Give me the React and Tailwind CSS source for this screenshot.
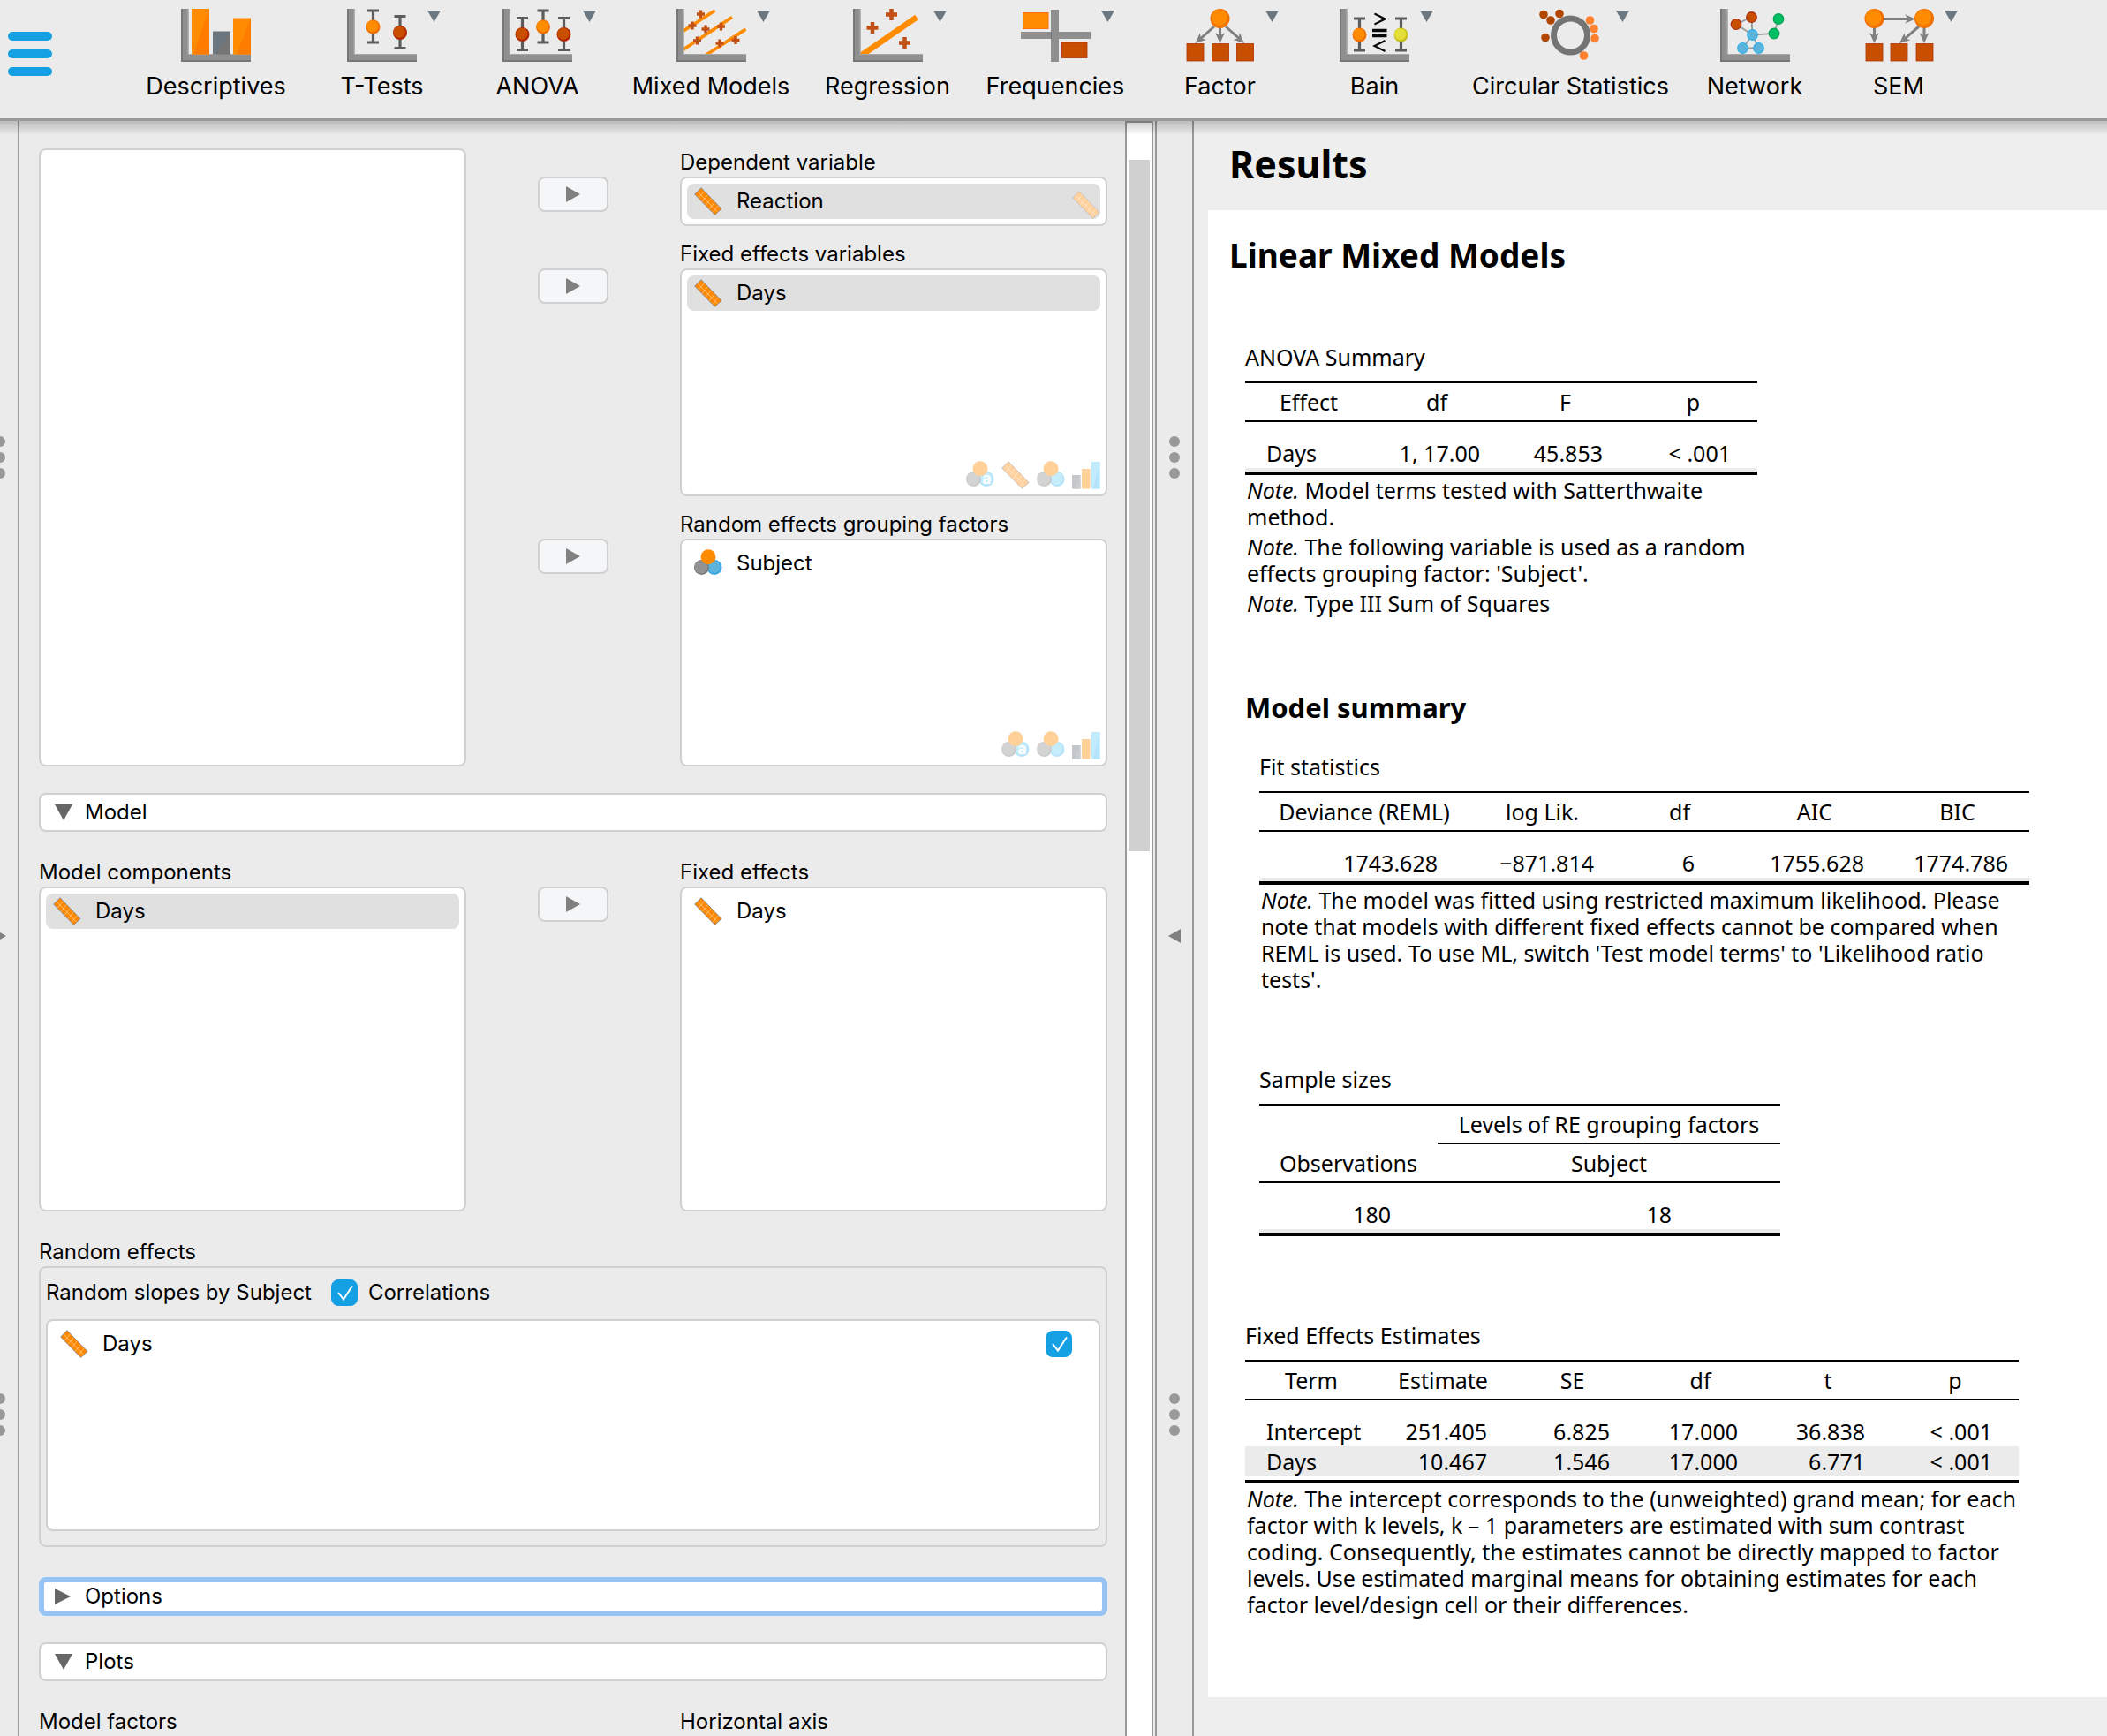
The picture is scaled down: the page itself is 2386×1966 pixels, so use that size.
import React, { useId } from "react";

/* ---------- toolbar drawings (79 x 60 canvas) ---------- */

const ORANGE = "#ff8c00";
const RUST = "#c84f00";
const GREY = "#8f8f8f";

function Canvas({ children }) {
  return (
    <svg width="79" height="60" viewBox="0 0 79 60" className="block shrink-0" aria-hidden="true">
      {children}
    </svg>
  );
}

function Axes() {
  return (
    <g>
      <path d="M0 0H8.5V51.5H79V60H0Z" fill={GREY} />
      <path d="M1 0V59H79" fill="none" stroke="#777" strokeWidth="2" />
      <path d="M8 0V51.5H79" fill="none" stroke="#a8a8a8" strokeWidth="1" />
    </g>
  );
}

function Ball({ x, y, r = 8.5, dark = "#f07000", light = ORANGE }) {
  return (
    <g>
      <circle cx={x} cy={y} r={r} fill={dark} />
      <circle cx={x - r * 0.08} cy={y - r * 0.1} r={r * 0.82} fill={light} />
    </g>
  );
}

function Whisker({ x, top, dark, light }) {
  return (
    <g>
      <path
        d={`M${x - 6.5} ${top + 2}H${x + 6.5}M${x - 6.5} ${top + 38}H${x + 6.5}M${x} ${top + 2}V${top + 38}`}
        stroke="#5c5c5c"
        strokeWidth="3.2"
        fill="none"
      />
      <Ball x={x} y={top + 20.5} r={8} dark={dark} light={light} />
    </g>
  );
}

function Plus({ x, y, s = 4.5, w = 3.4 }) {
  return <path d={`M${x - s} ${y}H${x + s}M${x} ${y - s}V${y + s}`} stroke="#c25015" strokeWidth={w} fill="none" />;
}

function Arrow({ x1, y1, x2, y2 }) {
  const a = Math.atan2(y2 - y1, x2 - x1);
  const at = (len, turn) => `${x2 - len * Math.cos(a + turn)} ${y2 - len * Math.sin(a + turn)}`;
  return (
    <g>
      <path d={`M${x1} ${y1}L${at(6, 0)}`} stroke="#808080" strokeWidth="3" fill="none" />
      <path d={`M${x2} ${y2}L${at(13, 0.42)}L${at(8.5, 0)}L${at(13, -0.42)}Z`} fill="#808080" />
    </g>
  );
}

function Box({ x, y = 39.5, w = 19, h = 19.5 }) {
  return <rect x={x} y={y} width={w} height={h} fill={RUST} stroke="#b03000" strokeWidth="0.8" />;
}

function DescriptivesIcon() {
  return (
    <Canvas>
      <Axes />
      <rect x="12" y="0" width="20" height="51.5" fill={ORANGE} />
      <path d="M32 0V51.5H14Z" fill="#ff7c00" />
      <rect x="36" y="25.5" width="20" height="26" fill="#6b767e" />
      <path d="M56 25.5V51.5H40Z" fill="#757575" />
      <rect x="59" y="10.5" width="20" height="41" fill={ORANGE} />
      <path d="M79 10.5V51.5H63Z" fill="#ff7c00" />
    </Canvas>
  );
}

function TTestsIcon() {
  return (
    <Canvas>
      <Axes />
      <Whisker x={29.5} top={0} />
      <Whisker x={60} top={6.5} dark="#b02800" light={RUST} />
    </Canvas>
  );
}

function AnovaIcon() {
  return (
    <Canvas>
      <Axes />
      <Whisker x={22.5} top={8.5} dark="#b02800" light={RUST} />
      <Whisker x={46} top={0} />
      <Whisker x={69.5} top={8.5} dark="#b02800" light={RUST} />
    </Canvas>
  );
}

function MixedIcon() {
  return (
    <Canvas>
      <path d="M8 25L43.500 2M8 46L63 9.500M34 52L78.500 23" stroke={ORANGE} strokeWidth="3.8" fill="none" />
      <Axes />
      <Plus x={27.500} y={6} />
      <Plus x={18} y={19} />
      <Plus x={33} y={23} />
      <Plus x={50.500} y={20} />
      <Plus x={23.500} y={36} />
      <Plus x={49} y={39} />
      <Plus x={67} y={35.500} />
    </Canvas>
  );
}

function RegressionIcon() {
  return (
    <Canvas>
      <path d="M9 53L72 9.500" stroke={ORANGE} strokeWidth="6.500" fill="none" />
      <Axes />
      <Plus x={43.500} y={6.500} s={6.500} w={4.500} />
      <Plus x={22} y={21.500} s={6.500} w={4.500} />
      <Plus x={58.500} y={38.500} s={6.500} w={4.500} />
    </Canvas>
  );
}

function FrequenciesIcon() {
  return (
    <Canvas>
      <rect x="2.500" y="4.500" width="28.500" height="18" fill={ORANGE} stroke="#ff7010" strokeWidth="1" />
      <rect x="0" y="26" width="79" height="8" fill={GREY} />
      <rect x="34" y="1" width="9" height="59" fill={GREY} />
      <path d="M34.500 26V34" stroke="#6b767e" strokeWidth="1" />
      <Box x={46.500} y={38} w={28.500} h={17.500} />
    </Canvas>
  );
}

function FactorIcon() {
  return (
    <Canvas>
      <Arrow x1={33} y1={20} x2={11.500} y2={39} />
      <Arrow x1={39.500} y1={20} x2={39.500} y2={39} />
      <Arrow x1={46} y1={20} x2={67} y2={39} />
      <Ball x={39.500} y={11} r={11} />
      <Box x={2} />
      <Box x={30.500} />
      <Box x={58.500} />
    </Canvas>
  );
}

function BainIcon() {
  return (
    <Canvas>
      <Axes />
      <Whisker x={22.500} top={9} />
      <Whisker x={69.500} top={9} dark="#c8c020" light="#e4de38" />
      <g fill="none" stroke="#0a0a0a">
        <path d="M39.500 5.500L51.500 11.500L39.500 17.500M51.500 36L39.500 42L51.500 48" strokeWidth="2.200" />
        <path d="M37 24.500H53.500M37 30.500H53.500" strokeWidth="3.400" />
      </g>
    </Canvas>
  );
}

function CircularIcon() {
  const brown = [[9, 6.500], [27, 5.500], [17, 13], [11, 32.500]];
  const orange = [[61.500, 13], [66, 22.500], [67, 33.500], [54.500, 53]];
  return (
    <Canvas>
      <circle cx="39.500" cy="30" r="19" fill="none" stroke="#747474" strokeWidth="7" />
      {brown.map(([x, y]) => <circle key={`${x}-${y}`} cx={x} cy={y} r="4.800" fill="#b04600" />)}
      {orange.map(([x, y]) => <circle key={`${x}-${y}`} cx={x} cy={y} r="4.800" fill="#ff812e" />)}
    </Canvas>
  );
}

function NetworkIcon() {
  const nodes = [
    [18, 17.500, RUST, "#a82a10"], [35.500, 9.500, RUST, "#a82a10"],
    [66, 11.500, "#00bf63", "#00a050"], [61, 28, "#00bf63", "#00a050"],
    [36.500, 29.500, "#5cb4dc", "#2fb0e8"], [25.500, 44.500, "#5cb4dc", "#2fb0e8"], [43.500, 44.500, "#5cb4dc", "#2fb0e8"],
  ];
  return (
    <Canvas>
      <Axes />
      <path d="M36.500 29.500L18 17.500L35.500 9.500L36.500 29.500L61 28L66 11.500M36.500 29.500L25.500 44.500H43.500Z" stroke="#999" strokeWidth="1.800" fill="none" />
      {nodes.map(([x, y, fill, edge]) => (
        <circle key={`${x}-${y}`} cx={x} cy={y} r="5.800" fill={fill} stroke={edge} strokeWidth="1.200" />
      ))}
    </Canvas>
  );
}

function SemIcon() {
  return (
    <Canvas>
      <Arrow x1={20} y1={11.500} x2={58} y2={11.500} />
      <Arrow x1={11.500} y1={20} x2={11.500} y2={39} />
      <Arrow x1={68} y1={20} x2={68} y2={39} />
      <Arrow x1={62} y1={20} x2={40} y2={39} />
      <Ball x={11.500} y={11} r={11} />
      <Ball x={68} y={11} r={11} />
      <Box x={2} />
      <Box x={30} />
      <Box x={59} />
    </Canvas>
  );
}

const MODULES = [
  { name: "Descriptives", Icon: DescriptivesIcon, width: "w-[199px]" },
  { name: "T-Tests", Icon: TTestsIcon, width: "w-[177px]", menu: true },
  { name: "ANOVA", Icon: AnovaIcon, width: "w-[175px]", menu: true },
  { name: "Mixed Models", Icon: MixedIcon, width: "w-[218px]", menu: true },
  { name: "Regression", Icon: RegressionIcon, width: "w-[182px]", menu: true },
  { name: "Frequencies", Icon: FrequenciesIcon, width: "w-[198px]", menu: true },
  { name: "Factor", Icon: FactorIcon, width: "w-[175px]", menu: true },
  { name: "Bain", Icon: BainIcon, width: "w-[175px]", menu: true },
  { name: "Circular Statistics", Icon: CircularIcon, width: "w-[269px]", menu: true },
  { name: "Network", Icon: NetworkIcon, width: "w-[148px]" },
  { name: "SEM", Icon: SemIcon, width: "w-[178px]", menu: true },
];

function Toolbar() {
  return (
    <header className="relative z-10 flex h-[137px] items-start border-b-[3px] border-[#999999] bg-[#ebebeb]">
      <button type="button" aria-label="Main menu" className="mt-9 flex w-[145px] shrink-0 flex-col gap-2.5 pl-[9px]">
        <span className="h-2.5 w-[50px] rounded-full bg-[#15a0e3]" />
        <span className="h-2.5 w-[50px] rounded-full bg-[#15a0e3]" />
        <span className="h-2.5 w-[50px] rounded-full bg-[#15a0e3]" />
      </button>
      <nav className="flex" aria-label="Analyses">
        {MODULES.map(({ name, Icon, width, menu }) => (
          <button key={name} type="button" className={`${width} flex shrink-0 flex-col items-center pt-2.5`}>
            <span className="flex items-start">
              <span className="w-[27px]" />
              <Icon />
              <span className="w-[27px] pl-3 pt-0.5">
                {menu && (
                  <svg width="15" height="13" viewBox="0 0 15 13" className="block" aria-hidden="true">
                    <path d="M0 0H15L7.5 13Z" fill="#6c7780" />
                  </svg>
                )}
              </span>
            </span>
            <span className="mt-[11px] text-[27px] leading-[34px] whitespace-nowrap">{name}</span>
          </button>
        ))}
      </nav>
      <div className="pointer-events-none absolute inset-x-0 top-full mt-[3px] h-4 bg-linear-to-b from-black/20 to-transparent" />
    </header>
  );
}

/* ---------- variable type icons (32 x 32) ---------- */

function ScaleIcon({ pale = false }) {
  return (
    <svg width="32" height="32" viewBox="0 0 32 32" className="block shrink-0" aria-hidden="true">
      <path
        d="M8 .7L31 24.500L23.500 31.300L.7 8Z"
        fill={pale ? "#ffd09c" : "#ff8800"}
        stroke={pale ? "#c8c0b8" : "#8a8a8a"}
        strokeWidth="1"
      />
      <path
        d="M4 5L27 28.500M11.500 4.500L5 12.500M15.500 8.500L9 16.500M19.500 12.500L13 20.500M23.500 16.500L17 24.500M27.500 20.500L21 28.500"
        stroke={pale ? "#ffe6cc" : "#ffc27a"}
        strokeWidth="0.900"
        fill="none"
      />
    </svg>
  );
}

function NominalIcon({ text = false, pale = false }) {
  return (
    <svg width="32" height="32" viewBox="0 0 32 32" className={`block shrink-0 ${pale ? "opacity-40" : ""}`} aria-hidden="true">
      <circle cx="23" cy="20.500" r="8.500" fill={pale ? "#48bdf5" : "#37a5e0"} />
      <circle cx="22.500" cy="20" r="7" fill={pale ? "#70d4fa" : "#5cb4dc"} />
      <circle cx="8.500" cy="20.500" r="8.500" fill="#77797c" />
      <circle cx="8" cy="20" r="7.500" fill="#929292" />
      <circle cx="16" cy="8.700" r="8.500" fill={ORANGE} />
      {text && (
        <text x="23.500" y="26" textAnchor="middle" fontSize="17" fontWeight="700" fill="#fff" fontFamily="Inter, sans-serif">a</text>
      )}
    </svg>
  );
}

function OrdinalIcon({ pale = false }) {
  return (
    <svg width="32" height="32" viewBox="0 0 32 32" className={`block shrink-0 ${pale ? "opacity-40" : ""}`} aria-hidden="true">
      <rect x="0" y="16" width="9.500" height="15.500" fill="#6b767e" />
      <path d="M9.500 16V31.500H3Z" fill="#7d8488" />
      <rect x="11" y="9" width="9.500" height="22.500" fill={ORANGE} />
      <rect x="22" y="1" width="9.500" height="30.500" fill="#66d0fb" />
      <path d="M31.500 1V31.500H24Z" fill="#48bdf5" />
    </svg>
  );
}

const TYPE_ICONS = {
  scale: <ScaleIcon />,
  nominal: <NominalIcon />,
};

const ALLOWED_ICONS = {
  scale: <ScaleIcon pale />,
  nominal: <NominalIcon pale />,
  nominalText: <NominalIcon text pale />,
  ordinal: <OrdinalIcon pale />,
};

/* ---------- form controls ---------- */

const LABEL = "block text-[24px] leading-8";

function VariableList({ label, items = [], allowed = [], height }) {
  const id = useId();
  return (
    <div>
      {label && <span id={id} className={LABEL}>{label}</span>}
      <div className={`${height} relative rounded-lg border-2 border-[#d0d0d0] bg-white p-1.5`}>
        <ul aria-labelledby={label ? id : undefined} aria-label={label ? undefined : "Available variables"}>
          {items.map(({ name, type, selected }) => (
            <li key={name} className={`flex h-10 items-center rounded-lg px-2 ${selected ? "bg-[#e0e0e0]" : ""}`}>
              {TYPE_ICONS[type]}
              <span className="pl-4 text-[24px] leading-8">{name}</span>
            </li>
          ))}
        </ul>
        {allowed.length > 0 && (
          <div className="absolute right-1.5 bottom-1.5 flex gap-2">
            {allowed.map((type) => <span key={type}>{ALLOWED_ICONS[type]}</span>)}
          </div>
        )}
      </div>
    </div>
  );
}

function AssignButton({ label }) {
  return (
    <button
      type="button"
      aria-label={label}
      className="flex h-10 w-20 items-center justify-center rounded-lg border-2 border-[#d0d0d0] bg-[#f5f6f8]"
    >
      <svg width="16" height="18" viewBox="0 0 16 18" aria-hidden="true">
        <path d="M0 0L16 9L0 18Z" fill="#808080" />
      </svg>
    </button>
  );
}

function Checkbox({ label, hiddenLabel }) {
  return (
    <label className="flex items-center gap-3 text-[24px] leading-8">
      <span className="relative block size-[30px]">
        <input type="checkbox" defaultChecked aria-label={hiddenLabel} className="block size-[30px] appearance-none rounded-lg border border-[#15a0e3] bg-white checked:bg-[#15a0e3]" />
        <svg width="30" height="30" viewBox="0 0 30 30" className="pointer-events-none absolute inset-0" aria-hidden="true">
          <path d="M8.500 15.500L14 22.500L23.500 8" fill="none" stroke="#fff" strokeWidth="2" strokeLinecap="round" />
        </svg>
      </span>
      {label}
    </label>
  );
}

function SectionHeader({ title, open, focused }) {
  return (
    <button
      type="button"
      aria-expanded={open}
      className={`flex h-11 w-full items-center rounded-lg bg-white text-left text-[24px] leading-8 ${
        focused ? "border-6 border-[#98c3f5] pl-3" : "border-2 border-[#d0d0d0] pl-4"
      }`}
    >
      <svg width="20" height="18" viewBox="0 0 20 18" aria-hidden="true">
        <path d={open ? "M0 0H20L10 18Z" : "M0 0L18 9L0 18Z"} fill="#666" />
      </svg>
      <span className="pl-[14px]">{title}</span>
    </button>
  );
}

const TRIPLE = "grid grid-cols-[2fr_1fr_2fr]";

function AnalysisForm() {
  return (
    <main className="min-w-0 bg-[#ebebeb] pt-[31px] pr-5 pl-[22px]">
      <div className={TRIPLE}>
        <VariableList height="h-[700px]" />
        <div className="flex flex-col items-center pt-8">
          <AssignButton label="Assign dependent variable" />
          <div className="h-16" />
          <AssignButton label="Assign fixed effects variables" />
          <div className="h-[266px]" />
          <AssignButton label="Assign grouping factors" />
        </div>
        <div className="flex flex-col gap-4">
          <VariableList label="Dependent variable" height="h-14" items={[{ name: "Reaction", type: "scale", selected: true }]} allowed={["scale"]} />
          <VariableList
            label="Fixed effects variables"
            height="h-[258px]"
            items={[{ name: "Days", type: "scale", selected: true }]}
            allowed={["nominalText", "scale", "nominal", "ordinal"]}
          />
          <VariableList
            label="Random effects grouping factors"
            height="h-[258px]"
            items={[{ name: "Subject", type: "nominal" }]}
            allowed={["nominalText", "nominal", "ordinal"]}
          />
        </div>
      </div>

      <div className="mt-[30px]"><SectionHeader title="Model" open /></div>

      <div className={`${TRIPLE} mt-[30px]`}>
        <VariableList label="Model components" height="h-[368px]" items={[{ name: "Days", type: "scale", selected: true }]} />
        <div className="flex flex-col items-center pt-8">
          <AssignButton label="Assign fixed effects" />
        </div>
        <VariableList label="Fixed effects" height="h-[368px]" items={[{ name: "Days", type: "scale" }]} />
      </div>

      <section className="mt-[30px]">
        <h2 className={LABEL}>Random effects</h2>
        <div className="rounded-lg border-2 border-[#d0d0d0] px-1.5 pt-3 pb-4">
          <div className="flex items-center gap-[22px]">
            <span className="text-[24px] leading-8">Random slopes by Subject</span>
            <Checkbox label="Correlations" />
          </div>
          <ul aria-label="Random slopes" className="mt-3.5 h-60 rounded-lg border-2 border-[#d0d0d0] bg-white py-1.5">
            <li className="flex h-10 items-center pr-[30px] pl-[14px]">
              <ScaleIcon />
              <span className="grow pl-4 text-[24px] leading-8">Days</span>
              <Checkbox hiddenLabel="Include Days" />
            </li>
          </ul>
        </div>
      </section>

      <div className="mt-[34px]"><SectionHeader title="Options" open={false} focused /></div>
      <div className="mt-[30px]"><SectionHeader title="Plots" open /></div>

      <div className={`${TRIPLE} mt-[30px]`}>
        <span className={LABEL}>Model factors</span>
        <span />
        <span className={LABEL}>Horizontal axis</span>
      </div>
    </main>
  );
}

/* ---------- splitters ---------- */

function Dots() {
  return (
    <span className="flex flex-col gap-1.5">
      <span className="size-3 rounded-full bg-[#999999]" />
      <span className="size-3 rounded-full bg-[#999999]" />
      <span className="size-3 rounded-full bg-[#999999]" />
    </span>
  );
}

function Handle({ direction }) {
  return (
    <div className="flex w-10 shrink-0 flex-col items-center justify-between pt-[357px] pb-[340px]">
      <Dots />
      <button type="button" aria-label={direction === "left" ? "Collapse results" : "Show data"}>
        <svg width="14" height="16" viewBox="0 0 14 16" className="block" aria-hidden="true">
          <path d={direction === "left" ? "M14 0L0 8L14 16Z" : "M0 0L14 8L0 16Z"} fill="#808080" />
        </svg>
      </button>
      <Dots />
    </div>
  );
}

function ScrollTrack() {
  return (
    <div className="flex border-r-2 border-[#ebebeb]">
      <div className="flex grow flex-col border-x-2 border-t-2 border-[#999999] bg-white px-0.5">
        <div className="grow-[42]" />
        <div className="grow-[783] bg-[#d0d0d0]" />
        <div className="grow-[1003]" />
      </div>
    </div>
  );
}

/* ---------- results ---------- */

function Note({ children }) {
  return <p className="mb-1 last:mb-0"><i>Note.</i> {children}</p>;
}

function ResultTable({ caption, width, cols, head, rows, notes }) {
  return (
    <div className={`${width} max-w-full`}>
      <table className="w-full table-fixed border-separate border-spacing-0 text-[25px] leading-8">
        <caption className="pb-3 text-left">{caption}</caption>
        <colgroup>{cols.map((c, i) => <col key={i} className={c.w} />)}</colgroup>
        <thead>{head}</thead>
        <tbody>
          <tr><td colSpan={cols.length} className="h-[18px] p-0" /></tr>
          {rows.map((row, r) => (
            <tr key={r} className={r % 2 ? "bg-[#ebebeb]" : ""}>
              {row.map((cell, i) => (
                <td key={i} className={`${cols[i].pad} h-[34px] py-0 leading-[34px] whitespace-nowrap`}>{cell}</td>
              ))}
            </tr>
          ))}
          <tr className={rows.length % 2 ? "bg-[#ebebeb]" : ""}>
            <td colSpan={cols.length} className="h-2 border-b-4 border-black p-0" />
          </tr>
        </tbody>
      </table>
      {notes && <div className="pt-0.5 pl-0.5 text-[25px] leading-[30px]">{notes}</div>}
    </div>
  );
}

function HeadRow({ names }) {
  return (
    <tr>
      {names.map((n) => (
        <th key={n} scope="col" className="h-[46px] border-y-2 border-black p-0 text-center font-normal">{n}</th>
      ))}
    </tr>
  );
}

function Results() {
  return (
    <aside className="min-w-0 bg-[#eeeeee] pt-[25px] pb-[44px] pl-4 font-['Noto_Sans','Open_Sans',sans-serif]">
      <h1 className="pl-6 text-[43px] leading-[48px] font-bold">Results</h1>
      <div className="mt-7 bg-white pt-[31px] pb-[90px] pl-6">
        <h2 className="text-[37px] leading-10 font-bold">Linear Mixed Models</h2>
        <div className="pt-[79px] pl-[18px]">
          <ResultTable
            caption="ANOVA Summary"
            width="w-[580px]"
            cols={[
              { w: "w-[144px]", pad: "pl-6 pr-0 text-left" },
              { w: "w-[146px]", pad: "pl-0 pr-6 text-right" },
              { w: "w-[145px]", pad: "pl-0 pr-[30px] text-right" },
              { w: "w-[145px]", pad: "pl-0 pr-[30px] text-right" },
            ]}
            head={<HeadRow names={["Effect", "df", "F", "p"]} />}
            rows={[["Days", "1, 17.00", "45.853", "< .001"]]}
            notes={
              <>
                <Note>Model terms tested with Satterthwaite method.</Note>
                <Note>The following variable is used as a random effects grouping factor: 'Subject'.</Note>
                <Note>Type III Sum of Squares</Note>
              </>
            }
          />
          <h3 className="pt-[83px] pb-[31px] text-[31px] leading-10 font-bold">Model summary</h3>
          <div className="pl-4">
            <ResultTable
              caption="Fit statistics"
              width="w-[872px]"
              cols={[
                { w: "w-[238px]", pad: "pl-0 pr-9 text-right" },
                { w: "w-[165px]", pad: "pl-0 pr-6 text-right" },
                { w: "w-[146px]", pad: "pl-0 pr-14 text-right" },
                { w: "w-[160px]", pad: "pl-0 pr-6 text-right" },
                { w: "w-[163px]", pad: "pl-0 pr-6 text-right" },
              ]}
              head={<HeadRow names={["Deviance (REML)", "log Lik.", "df", "AIC", "BIC"]} />}
              rows={[["1743.628", "−871.814", "6", "1755.628", "1774.786"]]}
              notes={
                <Note>
                  The model was fitted using restricted maximum likelihood. Please note that models with different fixed
                  effects cannot be compared when REML is used. To use ML, switch 'Test model terms' to 'Likelihood ratio
                  tests'.
                </Note>
              }
            />
            <div className="pt-[82px]">
              <ResultTable
                caption="Sample sizes"
                width="w-[590px]"
                cols={[
                  { w: "w-[202px]", pad: "pl-0 pr-[53px] text-right" },
                  { w: "w-[388px]", pad: "pl-0 pr-[123px] text-right" },
                ]}
                head={
                  <>
                    <tr>
                      <td className="h-[46px] border-t-2 border-black p-0" />
                      <th scope="colgroup" className="h-[46px] border-y-2 border-black p-0 text-center font-normal">
                        Levels of RE grouping factors
                      </th>
                    </tr>
                    <tr>
                      <th scope="col" className="h-11 border-b-2 border-black p-0 text-center font-normal">Observations</th>
                      <th scope="col" className="h-11 border-b-2 border-black p-0 text-center font-normal">Subject</th>
                    </tr>
                  </>
                }
                rows={[["180", "18"]]}
              />
            </div>
          </div>
          <div className="pt-24">
            <ResultTable
              caption="Fixed Effects Estimates"
              width="w-[876px]"
              cols={[
                { w: "w-[150px]", pad: "pl-6 pr-0 text-left" },
                { w: "w-[148px]", pad: "pl-0 pr-6 text-right" },
                { w: "w-[145px]", pad: "pl-0 pr-[30px] text-right" },
                { w: "w-[145px]", pad: "pl-0 pr-[30px] text-right" },
                { w: "w-[144px]", pad: "pl-0 pr-[30px] text-right" },
                { w: "w-[144px]", pad: "pl-0 pr-[30px] text-right" },
              ]}
              head={<HeadRow names={["Term", "Estimate", "SE", "df", "t", "p"]} />}
              rows={[
                ["Intercept", "251.405", "6.825", "17.000", "36.838", "< .001"],
                ["Days", "10.467", "1.546", "17.000", "6.771", "< .001"],
              ]}
              notes={
                <Note>
                  The intercept corresponds to the (unweighted) grand mean; for each factor with k levels, k – 1
                  parameters are estimated with sum contrast coding. Consequently, the estimates cannot be directly
                  mapped to factor levels. Use estimated marginal means for obtaining estimates for each factor
                  level/design cell or their differences.
                </Note>
              }
            />
          </div>
        </div>
      </div>
    </aside>
  );
}

export default function App() {
  return (
    <div className="flex min-h-screen flex-col bg-[#ebebeb] font-[Inter,'Liberation_Sans',sans-serif] text-black">
      <Toolbar />
      <div className="grid grow grid-cols-[22px_minmax(0,1252fr)_34px_44px_minmax(0,1034fr)]">
        <div className="flex justify-end overflow-hidden border-r-2 border-[#999999]">
          <Handle direction="right" />
        </div>
        <AnalysisForm />
        <ScrollTrack />
        <div className="flex border-x-2 border-[#999999]">
          <Handle direction="left" />
        </div>
        <Results />
      </div>
    </div>
  );
}
